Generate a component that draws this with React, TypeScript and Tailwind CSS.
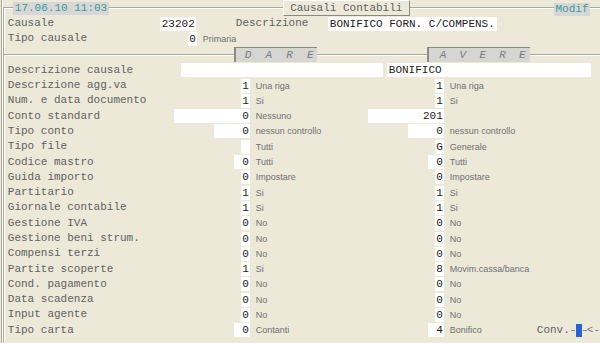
import React from "react";

type Cell = { v: string; w: 9 | 16 | 36 | 76; t: string };
type Row = { label: string; d: Cell; a: Cell };

const W: Record<number, string> = {
  9: "w-[9px]",
  16: "w-[16px]",
  36: "w-[36px]",
  76: "w-[76px]",
};

const c = (v: string, w: 9 | 16 | 36 | 76, t: string): Cell => ({ v, w, t });

const rows: Row[] = [
  { label: "Descrizione agg.va", d: c("1", 9, "Una riga"), a: c("1", 9, "Una riga") },
  { label: "Num. e data documento", d: c("1", 9, "Si"), a: c("1", 9, "Si") },
  { label: "Conto standard", d: c("0", 76, "Nessuno"), a: c("201", 76, "") },
  { label: "Tipo conto", d: c("0", 36, "nessun controllo"), a: c("0", 36, "nessun controllo") },
  { label: "Tipo file", d: c("", 9, "Tutti"), a: c("G", 9, "Generale") },
  { label: "Codice mastro", d: c("0", 16, "Tutti"), a: c("0", 16, "Tutti") },
  { label: "Guida importo", d: c("0", 9, "Impostare"), a: c("0", 9, "Impostare") },
  { label: "Partitario", d: c("1", 9, "Si"), a: c("1", 9, "Si") },
  { label: "Giornale contabile", d: c("1", 9, "Si"), a: c("1", 9, "Si") },
  { label: "Gestione IVA", d: c("0", 9, "No"), a: c("0", 9, "No") },
  { label: "Gestione beni strum.", d: c("0", 9, "No"), a: c("0", 9, "No") },
  { label: "Compensi terzi", d: c("0", 9, "No"), a: c("0", 9, "No") },
  { label: "Partite scoperte", d: c("1", 9, "Si"), a: c("8", 9, "Movim.cassa/banca") },
  { label: "Cond. pagamento", d: c("0", 9, "No"), a: c("0", 9, "No") },
  { label: "Data scadenza", d: c("0", 9, "No"), a: c("0", 9, "No") },
  { label: "Input agente", d: c("0", 9, "No"), a: c("0", 9, "No") },
];

const mono = "font-['Liberation_Mono','Courier_New',monospace]";
const sans = "font-['Liberation_Sans',Arial,sans-serif]";

function Line({ className = "" }: { className?: string }) {
  return <div className={`h-[2px] border-t border-[#aca899] border-b border-b-white ${className}`} />;
}

function Box({ v, w, align = "right" }: { v: string; w: string; align?: "right" | "left" }) {
  return (
    <div
      className={`${w} h-[14px] bg-white ${mono} text-[11px] leading-[14px] text-[#222] whitespace-pre overflow-hidden ${
        align === "right" ? "text-right pr-[1px]" : "text-left pl-[2px]"
      }`}
    >
      {v}
    </div>
  );
}

function Desc({ t }: { t: string }) {
  return <div className={`${sans} h-[14px] text-[9px] leading-[14px] text-[#707070] whitespace-nowrap`}>{t}</div>;
}

function Label({ children }: { children: React.ReactNode }) {
  return (
    <div className={`w-[164px] shrink-0 ${mono} text-[11px] leading-[15px] text-[#616161] whitespace-pre`}>
      {children}
    </div>
  );
}

export default function App() {
  return (
    <div className="w-[600px] h-[343px] bg-[#ece9d8] overflow-hidden flex">
      <div className="ml-[1px] w-[1px] h-full bg-[#aca899]" />
      <div className="w-[1px] h-full bg-white" />
      <div className="flex-1 flex flex-col">
        {/* header */}
        <div className="flex items-start h-[16px] shrink-0">
          <div className="w-[10px] h-[9px] mt-[7px] border-l border-t border-[#aca899] shadow-[inset_1px_1px_0_#fff]" />
          <div className={`w-[96px] h-[13px] mt-[2px] bg-[#d6d7d6] ${mono} text-[11px] leading-[13px] text-[#3a9a98] pl-[2px]`}>
            17.06.10 11:03
          </div>
          <Line className="w-[174px] mt-[7px]" />
          <div
            className={`w-[127px] h-[16px] border-l border-t border-white border-r border-r-[#8a8a80] border-b border-b-[#8a8a80] ${mono} text-[11px] leading-[14px] text-[#616161] text-center`}
          >
            Causali Contabili
          </div>
          <Line className="flex-1 mt-[7px]" />
          <div className={`w-[36px] h-[13px] mt-[3px] bg-[#d6d7d6] ${mono} text-[11px] leading-[13px] text-[#3a9a98] text-center`}>
            Modif
          </div>
          <Line className="w-[10px] mt-[7px]" />
        </div>

        {/* body */}
        <div className="flex-1 border-l border-[#aca899] shadow-[inset_1px_0_0_#fff] pl-[4px] flex flex-col">
          {/* Causale */}
          <div className="h-[15.3px] flex items-center">
            <div className={`w-[152px] shrink-0 ${mono} text-[11px] leading-[15px] text-[#616161]`}>Causale</div>
            <Box v="23202" w="w-[36px]" />
            <div className="w-[40px]" />
            <div className={`w-[92px] ${mono} text-[11px] leading-[15px] text-[#616161]`}>Descrizione</div>
            <Box v="BONIFICO FORN. C/COMPENS." w="w-[169px]" align="left" />
          </div>
          {/* Tipo causale */}
          <div className="h-[15.3px] flex items-center">
            <div className={`w-[180px] shrink-0 ${mono} text-[11px] leading-[15px] text-[#616161]`}>Tipo causale</div>
            <Box v="0" w="w-[9px]" />
            <div className="pl-[6px]">
              <Desc t="Primaria" />
            </div>
          </div>
          {/* DARE / AVERE header */}
          <div className="h-[16px] -ml-[4px] flex items-center">
            <Line className="w-[230px]" />
            <div
              className={`w-[83px] h-[15px] bg-[#d5d5d2] border-l-2 border-t border-[#8a8a86] pl-[9px] ${mono} italic text-[11px] leading-[14px] text-[#7c7c7c] tracking-[14.1px] whitespace-nowrap`}
            >
              DARE
            </div>
            <Line className="w-[110px]" />
            <div
              className={`w-[103px] h-[15px] bg-[#d5d5d2] border-l-2 border-t border-[#8a8a86] pl-[11px] ${mono} italic text-[11px] leading-[14px] text-[#7c7c7c] tracking-[13.2px] whitespace-nowrap`}
            >
              AVERE
            </div>
            <Line className="flex-1" />
          </div>
          {/* Descrizione causale */}
          <div className="h-[15.3px] flex items-center">
            <Label>Descrizione causale</Label>
            <div className="w-[9px]" />
            <Box v="" w="w-[202px]" align="left" />
            <div className="w-[4px]" />
            <Box v="BONIFICO" w="w-[204px]" align="left" />
          </div>
          {rows.map((r) => (
            <div key={r.label} className="h-[15.3px] flex items-center">
              <Label>{r.label}</Label>
              <div className="w-[78px] flex justify-end">
                <Box v={r.d.v} w={W[r.d.w]} />
              </div>
              <div className="w-[116px] pl-[6px] overflow-hidden">
                <Desc t={r.d.t} />
              </div>
              <div className="w-[78px] flex justify-end">
                <Box v={r.a.v} w={W[r.a.w]} />
              </div>
              <div className="pl-[6px]">
                <Desc t={r.a.t} />
              </div>
            </div>
          ))}
          {/* Tipo carta */}
          <div className="h-[15.3px] flex items-center">
            <Label>Tipo carta</Label>
            <div className="w-[78px] flex justify-end">
              <Box v="0" w="w-[16px]" />
            </div>
            <div className="w-[116px] pl-[6px]">
              <Desc t="Contanti" />
            </div>
            <div className="w-[78px] flex justify-end">
              <Box v="4" w="w-[16px]" />
            </div>
            <div className="w-[93px] pl-[6px]">
              <Desc t="Bonifico" />
            </div>
            <div className={`flex items-center ${mono} text-[11px] leading-[15px] text-[#616161] whitespace-nowrap`}>
              <span>Conv.</span>
              <span className="w-[4px] h-[1px] bg-[#8a8a8a] ml-[1px] mr-[1px]" />
              <span className="w-[6px] h-[13px] bg-[#2860d8]" />
              <span className="w-[4px] h-[1px] bg-[#8a8a8a] ml-[1px]" />
              <span className="text-[#777]">&lt;-</span>
            </div>
          </div>
        </div>
      </div>
    </div>
  );
}
